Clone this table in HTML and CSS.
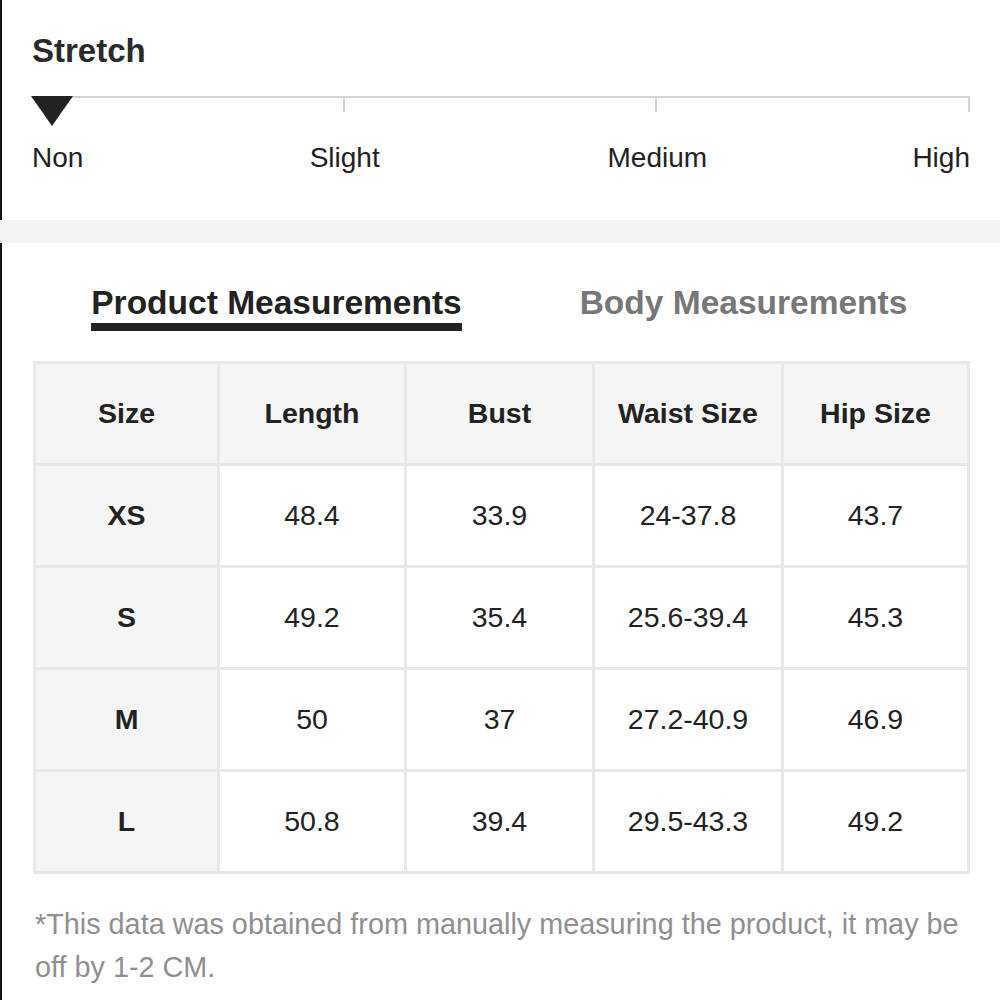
FILE: index.html
```html
<!DOCTYPE html>
<html>
<head>
<meta charset="utf-8">
<link rel="stylesheet" href="styles.css">
</head>
<body>
<section class="stretch">
  <h2 class="title">Stretch</h2>
  <div class="track">
    <div class="seg"></div><div class="seg"></div><div class="seg"></div>
    <span class="marker"></span>
  </div>
  <div class="labels">
    <span class="lbl lbl-non">Non</span>
    <span class="lbl lbl-slight">Slight</span>
    <span class="lbl lbl-medium">Medium</span>
    <span class="lbl lbl-high">High</span>
  </div>
</section>
<div class="band"></div>
<section class="measure">
  <div class="tabs">
    <div class="tab"><span class="tab-label active">Product Measurements</span></div>
    <div class="tab"><span class="tab-label">Body Measurements</span></div>
  </div>
  <table class="sizes">
    <colgroup>
      <col class="c-size"><col class="c-len"><col class="c-bust"><col class="c-waist"><col class="c-hip">
    </colgroup>
    <thead>
      <tr><th>Size</th><th>Length</th><th>Bust</th><th>Waist Size</th><th>Hip Size</th></tr>
    </thead>
    <tbody>
      <tr><th>XS</th><td>48.4</td><td>33.9</td><td>24-37.8</td><td>43.7</td></tr>
      <tr><th>S</th><td>49.2</td><td>35.4</td><td>25.6-39.4</td><td>45.3</td></tr>
      <tr><th>M</th><td>50</td><td>37</td><td>27.2-40.9</td><td>46.9</td></tr>
      <tr><th>L</th><td>50.8</td><td>39.4</td><td>29.5-43.3</td><td>49.2</td></tr>
    </tbody>
  </table>
  <p class="note">*This data was obtained from manually measuring the product, it may be off by 1-2 CM.</p>
</section>
</body>
</html>
```

FILE: styles.css
```css
* { box-sizing: border-box; }
html, body { margin: 0; padding: 0; background: #fff; }
body {
  font-family: "Liberation Sans", Arial, Helvetica, sans-serif;
  color: #222;
  width: 1000px;
}

.stretch {
  border-left: 2px solid #111;
  height: 220px;
  padding: 31px 30px 0 30px;
}
.title {
  margin: 0;
  font-size: 33px;
  line-height: 40px;
  font-weight: bold;
  color: #2a2a2a;
}
.track {
  position: relative;
  display: flex;
  margin-top: 25px;
  height: 16px;
}
.seg {
  flex: 1;
  border-top: 2px solid #d3d3d3;
  border-right: 2px solid #d3d3d3;
}
.marker {
  position: absolute;
  left: -1px;
  top: 0;
  width: 0;
  height: 0;
  border-left: 21px solid transparent;
  border-right: 21px solid transparent;
  border-top: 30px solid #222;
}
.labels {
  display: grid;
  grid-template-columns: repeat(6, 1fr);
  margin-top: 29px;
  font-size: 28px;
  line-height: 34px;
  color: #222;
}
.lbl-non { grid-column: 1; text-align: left; }
.lbl-slight { grid-column: 2 / span 2; text-align: center; }
.lbl-medium { grid-column: 4 / span 2; text-align: center; }
.lbl-high { grid-column: 6; text-align: right; }

.band {
  height: 23px;
  background: #f4f4f4;
}

.measure {
  border-left: 2px solid #111;
  padding: 40px 33px 20px 31px;
}
.tabs {
  display: grid;
  grid-template-columns: 1fr 1fr;
  margin: 0 -10px 0 10px;
}
.tab { text-align: center; }
.tab-label {
  display: inline-block;
  font-size: 33.5px;
  line-height: 40px;
  font-weight: bold;
  color: #777;
  border-bottom: 8px solid transparent;
}
.tab-label.active {
  color: #222;
  border-bottom-color: #222;
}

.sizes {
  width: 100%;
  margin-top: 30px;
  border-collapse: collapse;
  table-layout: fixed;
  border: 2px solid #e8e8e8;
  font-size: 28.5px;
}
.c-size { width: 184px; }
.c-len { width: 187px; }
.c-bust { width: 188px; }
.c-waist { width: 189px; }
.c-hip { width: 186px; }
.sizes th, .sizes td {
  border: 3px solid #e8e8e8;
  height: 102px;
  padding: 0;
  text-align: center;
  vertical-align: middle;
  color: #222;
}
.sizes th { font-weight: bold; background: #f5f5f5; }
.sizes td { font-weight: normal; background: #fff; }

.note {
  margin: 29px 0 0 2px;
  font-size: 28.8px;
  line-height: 43px;
  color: #8f8f8f;
}
```
